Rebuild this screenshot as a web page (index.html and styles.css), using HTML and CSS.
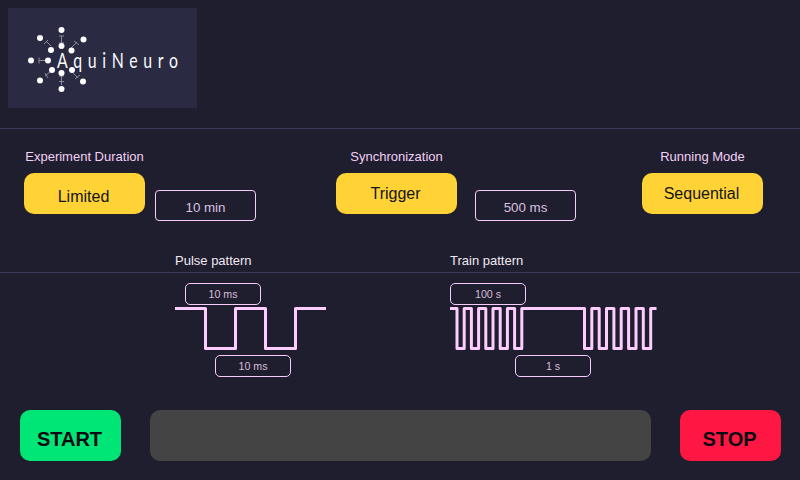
FILE: index.html
```html
<!DOCTYPE html>
<html lang="en">
<head>
<meta charset="utf-8">
<title>AquiNeuro</title>
<link rel="stylesheet" href="styles.css">
</head>
<body>
<header class="header">
  <div class="logo">
    <svg class="logo-art" width="189" height="100" viewBox="8 8 189 100">
      <g class="links">
        <path d="M61.5 36V43M59 36H64M59 43H64"/>
        <path d="M39 60.5H45M39 57.5V63.5"/>
        <path d="M46 41L51 46M44 44L48 40"/>
        <path d="M71 48L77 42M74 41L79 45"/>
        <path d="M61.5 76V85M59 76H64M59 81.5H64"/>
        <path d="M45 76L50 72M45 73L48 78"/>
        <path d="M72 72L78 78M75 79L80 75"/>
      </g>
      <g class="dots">
        <circle cx="61.5" cy="30" r="3"/><circle cx="61.5" cy="46" r="3"/>
        <circle cx="40" cy="38" r="3"/><circle cx="51" cy="50" r="3"/>
        <circle cx="71.5" cy="50.5" r="3"/><circle cx="83.5" cy="39.5" r="3"/>
        <circle cx="31" cy="60.5" r="3"/><circle cx="48" cy="60.5" r="3"/>
        <circle cx="52" cy="70" r="3"/><circle cx="61.5" cy="73" r="3"/>
        <circle cx="72" cy="70" r="3"/><circle cx="40" cy="80.5" r="3"/>
        <circle cx="83" cy="81.5" r="3"/><circle cx="61.5" cy="89" r="3"/>
      </g>
      <text class="logo-text" transform="translate(57 67.5) scale(.72 1)" textLength="168">AquiNeuro</text>
    </svg>
  </div>
</header>

<section class="settings">
  <div class="group">
    <div class="group-label">Experiment Duration</div>
    <div class="group-row">
      <button class="choice choice-low">Limited</button>
      <div class="value value-a">10 min</div>
    </div>
  </div>
  <div class="group">
    <div class="group-label">Synchronization</div>
    <div class="group-row">
      <button class="choice">Trigger</button>
      <div class="value value-b">500 ms</div>
    </div>
  </div>
  <div class="group">
    <div class="group-label">Running Mode</div>
    <div class="group-row">
      <button class="choice">Sequential</button>
    </div>
  </div>
</section>

<div class="pattern-titles">
  <div>Pulse pattern</div>
  <div>Train pattern</div>
</div>

<section class="patterns">
  <div class="pattern">
    <div class="pill pill-pulse-top">10 ms</div>
    <svg class="wave" width="152" height="44" viewBox="175 306 152 44">
      <path d="M175 308.5H205.5V348.5H235.5V308.5H265.5V348.5H295.5V308.5H326"/>
    </svg>
    <div class="pill pill-pulse-bottom">10 ms</div>
  </div>
  <div class="pattern">
    <div class="pill">100 s</div>
    <svg class="wave wave-train" width="207" height="44" viewBox="450 306 207 44">
      <path d="M450 308.5H457V348.5H464.2V308.5H471.4V348.5H478.6V308.5H485.8V348.5H493V308.5H500.2V348.5H507.4V308.5H514.6V348.5H521.8V308.5H584.5V348.5H591.8V308.5H599.2V348.5H606.5V308.5H613.9V348.5H621.2V308.5H628.6V348.5H636V308.5H643.3V348.5H650.7V308.5H656.5"/>
    </svg>
    <div class="pill pill-train-bottom">1 s</div>
  </div>
</section>

<footer class="footer">
  <button class="action action-start">START</button>
  <div class="status"></div>
  <button class="action action-stop">STOP</button>
</footer>
</body>
</html>
```

FILE: styles.css
```css
* { box-sizing: border-box; }
html, body { margin: 0; padding: 0; }
body {
  width: 800px;
  height: 480px;
  overflow: hidden;
  background: #1e1e2e;
  color: #f3d0f5;
  font-family: "Liberation Sans", Arial, sans-serif;
}
.header {
  height: 129px;
  padding: 8px;
  border-bottom: 1px solid #3a3a58;
}
.logo {
  width: 189px;
  height: 100px;
  background: #2a2a42;
}
.logo-art { display: block; }
.links path { fill: none; stroke: #8a8a98; stroke-width: 1; }
.dots circle { fill: #fff; }
.logo-text {
  fill: #fafafc;
  font-family: "Lato", sans-serif;
  font-weight: 400;
  font-size: 22px;
}
.settings {
  display: grid;
  grid-template-columns: 312px 306px auto;
  padding: 21px 0 0 24px;
  height: 107px;
}
.group-label {
  width: 121px;
  white-space: nowrap;
  display: flex;
  justify-content: center;
  font-size: 13px;
  line-height: 14px;
  margin-bottom: 9px;
}
.group-row { display: flex; align-items: flex-start; }
.choice {
  width: 121px;
  height: 41px;
  border: 0;
  border-radius: 10px;
  background: #ffd336;
  color: #14141c;
  font-family: inherit;
  font-size: 16px;
  padding: 0 2px 0 0;
}
.choice-low { padding-top: 6px; }
.value {
  width: 101px;
  height: 31px;
  margin-top: 17px;
  padding-top: 9px;
  border: 1px solid #f8ccfa;
  border-radius: 4px;
  font-size: 13.33px;
  line-height: 15px;
  text-align: center;
  color: #dcc0e0;
}
.value-a { margin-left: 10px; }
.value-b { margin-left: 18px; }
.pattern-titles {
  display: grid;
  grid-template-columns: 275px auto;
  height: 37px;
  padding: 18px 0 0 175px;
  border-bottom: 1px solid #3a3a58;
  font-size: 13px;
  line-height: 14px;
  color: #f0e8f2;
}
.patterns {
  display: grid;
  grid-template-columns: 275px auto;
  height: 137px;
  padding: 10px 0 0 175px;
}
.pattern { display: flex; flex-direction: column; align-items: flex-start; }
.pill {
  width: 76px;
  height: 22px;
  border: 1px solid #f8ccfa;
  border-radius: 5px;
  font-size: 10.67px;
  line-height: 21px;
  text-align: center;
  color: #d8bcdc;
}
.pill-pulse-top { margin-left: 10px; }
.pill-pulse-bottom { margin-left: 40px; }
.pill-train-bottom { margin-left: 65px; }
.wave { display: block; margin: 1px 0 5px; }
.wave path { fill: none; stroke: #ffccff; stroke-width: 3; stroke-linejoin: round; }
.wave-train path { stroke-width: 3; }
.footer {
  display: flex;
  align-items: flex-start;
  gap: 29px;
  padding: 0 19px 0 20px;
}
.action {
  width: 101px;
  height: 51px;
  border: 0;
  border-radius: 10px;
  padding: 8px 2px 0 0;
  font-family: inherit;
  font-size: 20px;
  font-weight: 700;
  color: #0a0a12;
}
.action-start { background: #00e676; }
.action-stop { background: #ff1744; }
.status {
  flex: 1;
  height: 51px;
  border-radius: 10px;
  background: #444444;
}
```
